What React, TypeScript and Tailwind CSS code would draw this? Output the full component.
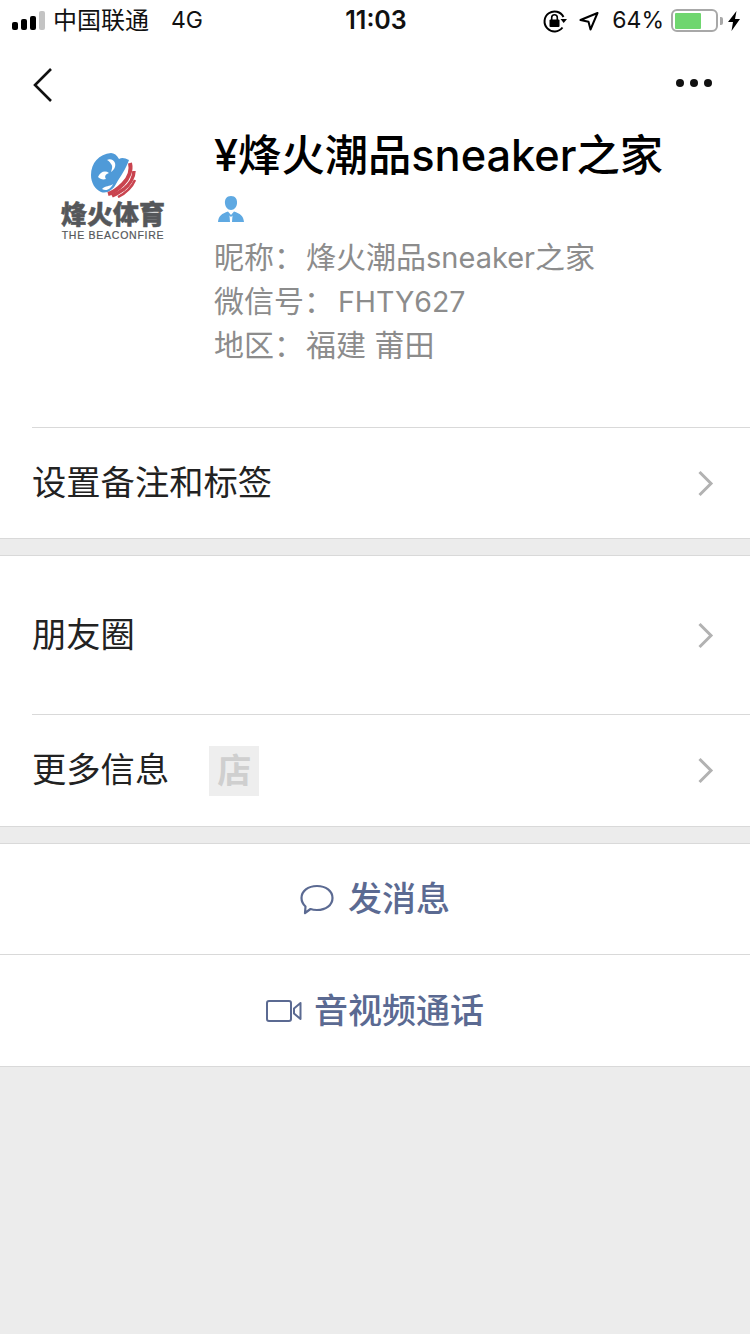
const sans = "font-['Inter','Noto_Sans_CJK_SC',sans-serif]";

function Chevron() {
  return (
    <svg width="16" height="27" viewBox="0 0 16 27" fill="none" className="block">
      <path d="M1.5 2 L13 13.5 L1.5 25" stroke="#b2b2b2" strokeWidth="3" />
    </svg>
  );
}

function StatusBar() {
  return (
    <div className="grid h-10 grid-cols-[1fr_auto_1fr] items-center pt-[1px] pl-3 pr-[10px] text-[24px] leading-none text-[#111]">
      <div className="flex items-center">
        <div className="flex items-end gap-[3px]">
          <span className="h-[8px] w-[6px] rounded-[2px] bg-black" />
          <span className="h-[11px] w-[6px] rounded-[2px] bg-black" />
          <span className="h-[14px] w-[6px] rounded-[2px] bg-black" />
          <span className="h-[19px] w-[6px] rounded-[2px] bg-[#c4c4c4]" />
        </div>
        <span className="ml-[8px] whitespace-nowrap">中国联通</span>
        <span className="ml-[22px] text-[23px]">4G</span>
      </div>
      <div className="text-center text-[25px] font-semibold">11:03</div>
      <div className="flex items-center justify-end">
        <svg width="24" height="24" viewBox="0 0 24 24" fill="none" className="mr-[12px]">
          <path d="M20.5 8 A10 10 0 1 0 19.5 18.5" stroke="#000" strokeWidth="2" />
          <path d="M17.5 10 L24 10 L20.7 14 Z" fill="#000" />
          <rect x="6.5" y="10.5" width="10" height="7.5" rx="1" fill="#000" />
          <path d="M8.7 11 V8.5 A2.8 2.8 0 0 1 14.3 8.5 V11" stroke="#000" strokeWidth="1.6" />
        </svg>
        <svg width="20" height="20" viewBox="0 0 20 20" fill="none" className="mr-[13px]">
          <path d="M18.5 2 L1.5 9 L9.5 10.8 L11.5 18.5 Z" stroke="#000" strokeWidth="2" strokeLinejoin="round" />
        </svg>
        <span className="mr-[7px] text-[23px]">64%</span>
        <div className="flex h-[23px] w-[47px] items-center rounded-[6px] border-2 border-[#a8a8a8] p-[1.5px]">
          <div className="h-full w-[26px] rounded-[1px] bg-[#6fd66f]" />
        </div>
        <span className="ml-[2px] h-[8px] w-[3px] rounded-r-[2px] bg-[#a8a8a8]" />
        <svg width="12" height="20" viewBox="0 0 12 20" className="ml-[5px]">
          <path d="M8.5 0 L0 11 H5 L3.5 20 L12 8 H7 Z" fill="#000" />
        </svg>
      </div>
    </div>
  );
}

function Logo() {
  return (
    <div className="flex w-[110px] shrink-0 flex-col items-center">
      <svg width="48" height="46" viewBox="0 0 48 46">
        <path d="M22 1 C10 2 2 11 2 23 C2 31 6 37 12 40 C18 42 24 38 27 32 C31 25 37 17 40 8 C36 6 33 5 30 7 C28 3 25 1 22 1 Z" fill="#4f9ad8" />
        <path d="M9 25 C11 20 16 18 20 21 C17 22 15 24 17 27 C14 28 11 27 9 25 Z" fill="#fff" />
        <path d="M13 37 C17 33 20 35 24 32 C22 36 18 40 13 37 Z" fill="#fff" />
        <path d="M18 8 C21 6 25 8 26 11 C27 15 25 18 22 20 C23 17 24 14 22 12 C21 10 20 9 18 8 Z" fill="#fff" />
        <path d="M41 11 C43 19 39 27 34 32 C30 36 26 40 19 42" stroke="#c9444f" strokeWidth="4" fill="none" />
        <path d="M45 19 C45 26 40 33 35 37 C31 40 27 42 23 44" stroke="#c9444f" strokeWidth="3.5" fill="none" />
        <path d="M46 28 C43 35 37 41 29 45" stroke="#c9444f" strokeWidth="2.5" fill="none" />
      </svg>
      <div className="mt-[4px] whitespace-nowrap text-[26px] font-black leading-[26px] text-[#55575a] [-webkit-text-stroke:0.5px_#55575a]">
        烽火体育
      </div>
      <div className="mt-[2px] whitespace-nowrap font-['Liberation_Sans',sans-serif] text-[10.5px] leading-[11px] tracking-[0.75px] text-[#55575a] [-webkit-text-stroke:0.2px_#55575a]">
        THE BEACONFIRE
      </div>
    </div>
  );
}

function Row({ height, label, badge }: { height: string; label: string; badge?: boolean }) {
  return (
    <div className={`flex items-center pr-[36px] pl-[32px] text-[34.3px] leading-none text-[#222] ${height}`}>
      <span>{label}</span>
      {badge && (
        <span className="ml-[40px] flex h-[50px] w-[50px] items-center justify-center bg-[#eeeeee] text-[34px] font-bold text-[#cfcfcf]">
          店
        </span>
      )}
      <span className="ml-auto">
        <Chevron />
      </span>
    </div>
  );
}

export default function App() {
  return (
    <div className={`flex h-[1334px] w-[750px] flex-col overflow-hidden bg-[#ececec] ${sans}`}>
      <div className="bg-white">
        <StatusBar />
        <div className="flex items-start justify-between pr-[38px] pl-[32px]">
          <svg width="22" height="36" viewBox="0 0 22 36" fill="none" className="mt-[27px]">
            <path d="M19 2 L3 18 L19 34" stroke="#111" strokeWidth="2.6" />
          </svg>
          <div className="mt-[39px] flex gap-[6px]">
            <span className="h-[8px] w-[8px] rounded-full bg-[#111]" />
            <span className="h-[8px] w-[8px] rounded-full bg-[#111]" />
            <span className="h-[8px] w-[8px] rounded-full bg-[#111]" />
          </div>
        </div>
        <div className="flex pl-[58px]">
          <div className="pt-[49px]">
            <Logo />
          </div>
          <div className="ml-[46px] mt-[24px] flex min-w-0 flex-col">
            <h1 className="whitespace-nowrap text-[43.3px] font-medium leading-[56px] text-black">¥烽火潮品sneaker之家</h1>
            <svg width="28" height="28" viewBox="0 0 28 28" className="mt-[12px] ml-[3px]">
              <path d="M14 1 C18.5 1 20.5 4.5 20 8.5 C19.6 12 17.5 15 14 15 C10.5 15 8.4 12 8 8.5 C7.5 4.5 9.5 1 14 1 Z" fill="#5fa9e2" />
              <path d="M1 27 C1.5 21 5 18.5 11 16.5 L14 20 L17 16.5 C23 18.5 26.5 21 27 27 Z" fill="#5fa9e2" />
              <path d="M12.5 20.5 L14 22 L15.5 20.5 L15 27 H13 Z" fill="#fff" />
            </svg>
            <div className="mt-[12px] flex flex-col text-[30px] leading-[44px] text-[#8c8c8c]">
              <span className="h-[44px] whitespace-nowrap">
                昵称：<span className="ml-[2px]">烽火潮品</span>
                <span className="text-[29px]">sneaker</span>之家
              </span>
              <span className="h-[44px] whitespace-nowrap">
                微信号：<span className="ml-[4px] text-[28.5px]">FHTY627</span>
              </span>
              <span className="h-[44px] whitespace-nowrap">
                地区：<span className="ml-[2px]">福建 莆田</span>
              </span>
            </div>
          </div>
        </div>
        <div className="ml-[32px] mt-[60px] h-px bg-[#d9d9d9]" />
        <Row height="h-[110px]" label="设置备注和标签" />
      </div>
      <div className="h-[18px] border-y border-[#d9d9d9]" />
      <div className="bg-white">
        <Row height="h-[158px]" label="朋友圈" />
        <div className="ml-[32px] h-px bg-[#d9d9d9]" />
        <Row height="h-[111px]" label="更多信息" badge />
      </div>
      <div className="h-[18px] border-y border-[#d9d9d9]" />
      <div className="border-b border-[#d9d9d9] bg-white text-[34px] font-medium leading-none text-[#5b6a92]">
        <div className="flex h-[110px] items-center justify-center gap-[14px]">
          <svg width="34" height="31" viewBox="0 0 34 31" fill="none">
            <path d="M17 2 C26 2 32.5 7 32.5 14 C32.5 21 26 26 17 26 C14.5 26 12 25.6 10.5 25 L5 29 L5.5 22.5 C2.8 20 1.5 17 1.5 14 C1.5 7 8 2 17 2 Z" stroke="#5b6a92" strokeWidth="2.2" strokeLinejoin="round" />
          </svg>
          <span>发消息</span>
        </div>
        <div className="h-px bg-[#d9d9d9]" />
        <div className="flex h-[111px] items-center justify-center gap-[12px]">
          <svg width="36" height="24" viewBox="0 0 36 24" fill="none">
            <rect x="1" y="2" width="24" height="20" rx="2" stroke="#5b6a92" strokeWidth="2" />
            <path d="M34.5 4 V20 L28 14.5 V9.5 Z" stroke="#5b6a92" strokeWidth="2" strokeLinejoin="round" />
          </svg>
          <span>音视频通话</span>
        </div>
      </div>
    </div>
  );
}
